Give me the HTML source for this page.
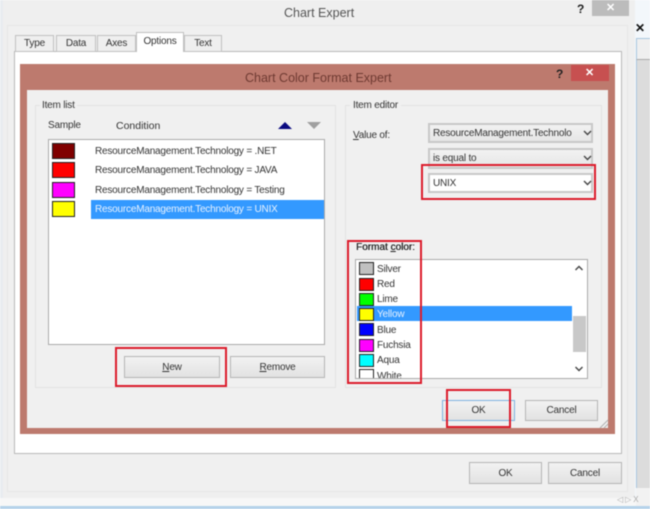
<!DOCTYPE html>
<html><head><meta charset="utf-8"><style>
html,body{margin:0;padding:0;background:#fff}
#p{position:relative;width:650px;height:509px;overflow:hidden;background:#f3f7fb;font-family:"Liberation Sans",sans-serif;font-size:10px;letter-spacing:-.2px;color:#333;filter:blur(.4px)}
#p div{position:absolute;box-sizing:border-box}
.t{white-space:nowrap;line-height:14px;height:14px;margin-top:1px}
.tab{white-space:nowrap;background:#efefef;border:1px solid #c0c0c0;text-align:center;line-height:16px}
.b{background:linear-gradient(#f2f2f2,#e2e2e2);border:1px solid #b5b5b5;text-align:center;line-height:21px;color:#333;white-space:nowrap}
.c{background:linear-gradient(#f2f2f2,#e6e6e6);border:2px solid #c8c8c8;text-align:left;padding-left:3px;line-height:18px;color:#333;white-space:nowrap}
.r{border:2px solid #dc1c2c}
.s{border:1px solid #222}
u{text-decoration:underline}
svg{position:absolute;overflow:visible}
</style></head><body><div id="p">
<div style="left:0;top:0;width:3px;height:509px;background:#e8ecf0"></div>
<div style="left:3px;top:0;width:632px;height:498px;background:#efefef"></div>
<div style="left:7px;top:25px;width:621px;height:467px;background:#f0f0f0;border:1px solid #e6e6e6"></div>
<div style="left:0;top:498px;width:650px;height:8px;background:#f7f7f7"></div>
<div style="left:0;top:506px;width:650px;height:3px;background:#b5d2ea"></div>
<div style="left:636px;top:38px;width:14px;height:468px;background:#dcdcdc;border-left:1px solid #a9c6de"></div>
<div style="left:636px;top:38px;width:14px;height:22px;background:#efefef;border-left:1px solid #a9c6de;border-top:1px solid #a9c6de;border-bottom:1px solid #aaa"></div>
<div style="left:636px;top:488px;width:14px;height:18px;background:#f2f2f2"></div>
<div class="t" style="left:635px;top:20px;font-size:12px;font-weight:bold;color:#111">✕</div>
<div class="t" style="left:617px;top:492px;font-size:8px;color:#aaa;letter-spacing:2px">◁▷X</div>

<div class="t" style="left:284px;top:5px;font-size:12.500px;letter-spacing:0;color:#555">Chart Expert</div>
<div class="t" style="left:577px;top:1px;font-size:12px;font-weight:bold;color:#222">?</div>
<div style="left:592px;top:0;width:37px;height:16px;background:#bcbcbc"></div>
<div class="t" style="left:606px;top:0;font-size:11px;color:#fff;font-weight:bold">✕</div>

<div style="left:14px;top:51px;width:608px;height:403px;background:#fff;border:1px solid #b9b9b9"></div>
<div class="tab" style="left:15px;top:35px;width:39px;height:17px">Type</div>
<div class="tab" style="left:56px;top:35px;width:40px;height:17px">Data</div>
<div class="tab" style="left:97px;top:35px;width:39px;height:17px">Axes</div>
<div class="tab" style="left:184px;top:35px;width:38px;height:17px">Text</div>
<div class="tab" style="left:136px;top:32px;width:48px;height:20px;background:#fff;border-bottom:0;line-height:18px">Options</div>

<div style="left:20px;top:64px;width:595px;height:370px;background:#bd7a6e"></div>
<div style="left:27px;top:90px;width:581px;height:338px;background:#f0f0f0"></div>
<div class="t" style="left:245px;top:70px;font-size:12.500px;letter-spacing:0;color:#6e3a32">Chart Color Format Expert</div>
<div class="t" style="left:556px;top:66px;font-size:12px;font-weight:bold;color:#222">?</div>
<div style="left:571px;top:65px;width:38px;height:16px;background:#c75050"></div>
<div class="t" style="left:585px;top:65px;font-size:11px;color:#fff;font-weight:bold">✕</div>

<div style="left:35px;top:105px;width:301px;height:283px;border:1px solid #e2e2e2"></div>
<div class="t" style="left:40px;top:98px;padding:0 2px;background:#f0f0f0">Item list</div>
<div class="t" style="left:48px;top:118px">Sample</div>
<div class="t" style="left:116px;top:118px;letter-spacing:0;font-size:10.500px">Condition</div>
<svg style="left:0;top:0" width="650" height="509"><path d="M278 129l7-7 7 7z" fill="#0a0a80"/><path d="M307 122h14l-7 7z" fill="#a0a0a0"/></svg>

<div style="left:48px;top:139px;width:277px;height:206px;background:#fff;border:1px solid #aaa"></div>
<div class="s" style="left:52px;top:143px;width:23px;height:16px;background:#800000"></div>
<div class="s" style="left:52px;top:162px;width:23px;height:16px;background:#f00"></div>
<div class="s" style="left:52px;top:182px;width:23px;height:16px;background:#f0f"></div>
<div class="s" style="left:52px;top:201px;width:23px;height:16px;background:#ff0"></div>
<div style="left:91px;top:200px;width:233px;height:19px;background:#3399ff"></div>
<div class="t" style="left:95px;top:144px">ResourceManagement.Technology = .NET</div>
<div class="t" style="left:95px;top:163px">ResourceManagement.Technology = JAVA</div>
<div class="t" style="left:95px;top:183px">ResourceManagement.Technology = Testing</div>
<div class="t" style="left:95px;top:202px;color:#e8f2ff">ResourceManagement.Technology = UNIX</div>

<div class="b" style="left:124px;top:356px;width:96px;height:22px"><u>N</u>ew</div>
<div class="b" style="left:230px;top:356px;width:95px;height:22px"><u>R</u>emove</div>
<div class="r" style="left:115px;top:347px;width:112px;height:40px"></div>

<div style="left:345px;top:105px;width:257px;height:283px;border:1px solid #e2e2e2"></div>
<div class="t" style="left:350px;top:98px;padding:0 3px;background:#f0f0f0">Item editor</div>
<div class="t" style="left:353px;top:128px"><u>V</u>alue of:</div>
<div class="c" style="left:428px;top:123px;width:165px;height:20px;overflow:hidden;padding-right:18px">ResourceManagement.Technolo</div>
<div class="c" style="left:428px;top:148px;width:165px;height:21px">is equal to</div>
<div class="c" style="left:428px;top:173px;width:165px;height:20px;background:#fff;padding-left:3px">UNIX</div>
<svg style="left:0;top:0" width="650" height="509" fill="none" stroke="#444" stroke-width="1.400"><path d="M584 131l3.500 3.500 3.500-3.500M584 156l3.500 3.500 3.500-3.500M584 181l3.500 3.500 3.500-3.500"/></svg>
<div class="r" style="left:421px;top:164px;width:175px;height:36px"></div>

<div class="t" style="left:356px;top:240px;color:#222;letter-spacing:0;text-shadow:.3px 0 #222">Format <u>c</u>olor:</div>
<div style="left:355px;top:259px;width:233px;height:120px;background:#fff;border:1px solid #aaa;overflow:hidden"></div>
<div style="left:357px;top:306px;width:215px;height:15px;background:#3399ff"></div>
<div style="left:573px;top:316px;width:13px;height:36px;background:#c8c8c8"></div>
<svg style="left:0;top:0" width="650" height="509" fill="none" stroke="#444" stroke-width="1.400"><path d="M575.500 270l3.500-3.500 3.500 3.500M575.500 367l3.500 3.500 3.500-3.500"/></svg>
<div class="s" style="left:359px;top:262px;width:15px;height:13px;background:silver"></div>
<div class="s" style="left:359px;top:278px;width:15px;height:13px;background:#f00"></div>
<div class="s" style="left:359px;top:293px;width:15px;height:13px;background:#0f0"></div>
<div class="s" style="left:359px;top:308px;width:15px;height:13px;background:#ff0"></div>
<div class="s" style="left:359px;top:323px;width:15px;height:13px;background:#00f"></div>
<div class="s" style="left:359px;top:339px;width:15px;height:13px;background:#f0f"></div>
<div class="s" style="left:359px;top:354px;width:15px;height:13px;background:#0ff"></div>
<div style="left:359px;top:369px;width:15px;height:9px;background:#fff;border:1px solid #222;border-bottom:0"></div>
<div class="t" style="left:377px;top:262px">Silver</div>
<div class="t" style="left:377px;top:277px">Red</div>
<div class="t" style="left:377px;top:292px">Lime</div>
<div class="t" style="left:377px;top:307px;color:#e8f2ff">Yellow</div>
<div class="t" style="left:377px;top:323px">Blue</div>
<div class="t" style="left:377px;top:338px">Fuchsia</div>
<div class="t" style="left:377px;top:353px">Aqua</div>
<div style="left:377px;top:371px;width:50px;height:7px;overflow:hidden;line-height:11px;white-space:nowrap">White</div>
<div class="r" style="left:347px;top:240px;width:75px;height:144px"></div>

<div class="b" style="left:442px;top:400px;width:73px;height:21px;border-color:#7fb2e0;line-height:19px">OK</div>
<div class="b" style="left:525px;top:400px;width:73px;height:21px;line-height:19px">Cancel</div>
<div class="r" style="left:446px;top:389px;width:65px;height:39px"></div>
<svg style="left:0;top:0" width="650" height="509" fill="none" stroke="#b0b0b0"><path d="M600 428l8-8M604 428l4-4"/></svg>

<div class="b" style="left:469px;top:462px;width:73px;height:22px">OK</div>
<div class="b" style="left:548px;top:462px;width:74px;height:22px">Cancel</div>
</div></body></html>
